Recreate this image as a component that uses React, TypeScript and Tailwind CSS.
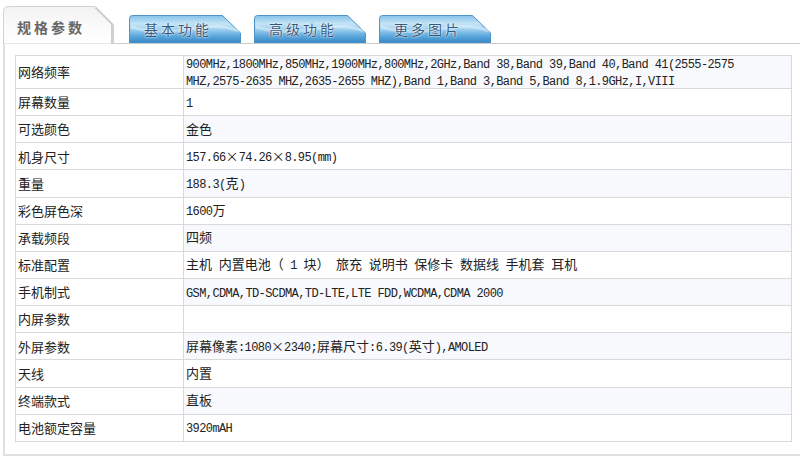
import React from "react";

const rows: [string, string[]][] = [
  [
    "网络频率",
    [
      "900MHz,1800MHz,850MHz,1900MHz,800MHz,2GHz,Band 38,Band 39,Band 40,Band 41(2555-2575",
      "MHZ,2575-2635 MHZ,2635-2655 MHZ),Band 1,Band 3,Band 5,Band 8,1.9GHz,I,VIII",
    ],
  ],
  ["屏幕数量", ["1"]],
  ["可选颜色", ["金色"]],
  ["机身尺寸", ["157.66×74.26×8.95(mm)"]],
  ["重量", ["188.3(克)"]],
  ["彩色屏色深", ["1600万"]],
  ["承载频段", ["四频"]],
  ["标准配置", ["主机 内置电池（ 1 块） 旅充 说明书 保修卡 数据线 手机套 耳机"]],
  ["手机制式", ["GSM,CDMA,TD-SCDMA,TD-LTE,LTE FDD,WCDMA,CDMA 2000"]],
  ["内屏参数", [""]],
  ["外屏参数", ["屏幕像素:1080×2340;屏幕尺寸:6.39(英寸),AMOLED"]],
  ["天线", ["内置"]],
  ["终端款式", ["直板"]],
  ["电池额定容量", ["3920mAH"]],
];

function Mixed({ text }: { text: string }) {
  const parts = text.split(/([\u3000-\u9fff\uff00-\uffef×]+)/);
  return (
    <>
      {parts.map((p, i) =>
        /[\u3000-\u9fff\uff00-\uffef×]/.test(p) ? (
          <span key={i} className="text-[13px] [font-family:'Noto_Sans_CJK_SC',sans-serif]">
            {p}
          </span>
        ) : (
          <span key={i} className="text-[12px] tracking-[-0.6px] [font-family:'Liberation_Mono',monospace]">
            {p}
          </span>
        )
      )}
    </>
  );
}

function BlueTab({ label }: { label: string }) {
  return (
    <div className="relative w-[112px] h-[28px] shrink-0">
      <svg className="absolute inset-0" width="112" height="28" viewBox="0 0 112 28">
        <defs>
          <linearGradient id="bt" x1="0" y1="0" x2="0" y2="1">
            <stop offset="0" stopColor="#86c2ea" />
            <stop offset="0.3" stopColor="#c4e4f6" />
            <stop offset="0.5" stopColor="#9fd0ef" />
            <stop offset="0.75" stopColor="#5ba7dc" />
            <stop offset="1" stopColor="#3586c6" />
          </linearGradient>
        </defs>
        <path d="M0.5,28 V3.5 Q0.5,0.5 3.5,0.5 H93.5 L111.5,18 V28 Z" fill="url(#bt)" stroke="#4d94c8" strokeWidth="1" />
        <path d="M2,12 Q30,20 60,14 T110,16" fill="none" stroke="#ffffff" strokeOpacity="0.35" strokeWidth="3" />
      </svg>
      <div className="relative pl-[15px] pt-[6px] text-[14px] leading-[16px] tracking-[3px] text-[#36597a] [font-family:'Noto_Sans_CJK_SC',sans-serif] [text-shadow:0_0_2px_#ffffff,0_0_1px_#ffffff]">
        {label}
      </div>
    </div>
  );
}

export default function App() {
  return (
    <div className="w-[800px] h-[460px] bg-white overflow-hidden relative text-[#222]">
      <div className="flex items-end h-[43px] pl-[3px] gap-[13px]">
        <div className="relative w-[112px] h-[38px] shrink-0 z-10 -mb-[1px] mr-[1px]">
          <svg className="absolute inset-0" width="112" height="38" viewBox="0 0 112 38">
            <defs>
              <linearGradient id="at" x1="0" y1="0" x2="0" y2="1">
                <stop offset="0" stopColor="#f2f2f2" />
                <stop offset="0.5" stopColor="#fafafa" />
                <stop offset="1" stopColor="#ffffff" />
              </linearGradient>
            </defs>
            <path d="M0.5,38 V5.5 Q0.5,0.5 5.5,0.5 H92 L110.5,19 V38 Z" fill="url(#at)" stroke="#d2d2d2" strokeWidth="1" />
            <path d="M92.5,1.5 L109,18 V38" fill="none" stroke="#cfcfcf" strokeWidth="2" />
          </svg>
          <div className="relative pl-[14px] pt-[12px] text-[14px] leading-[18px] font-bold tracking-[3px] text-[#666] [font-family:'Noto_Sans_CJK_SC',sans-serif]">
            规格参数
          </div>
        </div>
        <BlueTab label="基本功能" />
        <BlueTab label="高级功能" />
        <BlueTab label="更多图片" />
      </div>
      <div className="ml-[3px] w-[830px] h-[413px] border-t border-l-2 border-b-2 border-t-[#cccccc] border-l-[#e0e0e0] border-b-[#e0e0e0] pt-[11px] pl-[10px]">
        <div className="w-[777px] border-l border-r border-t border-[#d9d9d9]">
          {rows.map(([label, lines], i) => (
            <div
              key={label}
              className={
                "flex border-b border-[#d9d9d9] box-border " +
                (i === 0 ? "h-[33px]" : "h-[27.15px]")
              }
            >
              <div className="w-[168px] shrink-0 border-r border-[#d9d9d9] bg-white flex items-center pl-[2px] text-[13px] [font-family:'Noto_Sans_CJK_SC',sans-serif]">
                {label}
              </div>
              <div
                className={
                  "flex-1 flex flex-col justify-center pl-[2px] leading-[14px] " +
                  (i % 2 === 0 ? "bg-[#f8f9fc]" : "bg-white")
                }
              >
                {lines.map((l, j) => (
                  <div key={j} className="whitespace-pre">
                    <Mixed text={l} />
                  </div>
                ))}
              </div>
            </div>
          ))}
        </div>
      </div>
    </div>
  );
}
